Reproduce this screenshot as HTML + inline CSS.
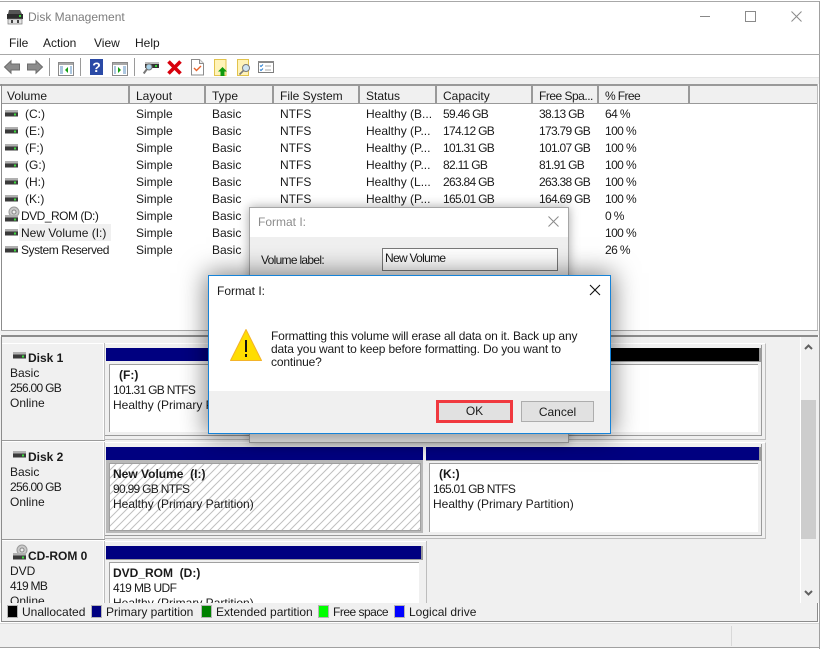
<!DOCTYPE html>
<html><head><meta charset="utf-8"><title>Disk Management</title>
<style>
html,body{margin:0;padding:0;background:#fff}
body{width:821px;height:649px;position:relative;overflow:hidden;font:12px/14px "Liberation Sans",sans-serif;color:#1a1a1a}
.a{position:absolute}
.t{position:absolute;white-space:nowrap;line-height:14px}
.n{letter-spacing:-.7px}
.p{letter-spacing:-.6px}
.h{position:absolute;top:86px;height:17px;background:#f0f0f0;border-right:2px solid #999;box-sizing:border-box;padding:3px 0 0 6px;white-space:nowrap;line-height:14px}
.bar{position:absolute;background:#000080}
b{font-weight:bold}
svg{position:absolute;overflow:visible}
.sq{position:absolute;top:605px;width:11px;height:13px;box-sizing:border-box;border:1px solid #b5b5b5}
</style></head><body>
<svg width="0" height="0" style="position:absolute"><defs>
<g id="drv"><rect x="0" y="0" width="13" height="2.500" fill="#b0b0b0"/><rect x="0" y="2.500" width="13" height="4" fill="#3a3a3a"/><rect x="9" y="3.500" width="2" height="2" fill="#3ddc3d"/></g>
<g id="cd"><circle cx="9" cy="5" r="5" fill="#c9c9c9" stroke="#9a9a9a"/><circle cx="9" cy="5" r="2" fill="#eee" stroke="#888"/><rect x="0" y="8" width="13" height="2.500" fill="#b0b0b0"/><rect x="0" y="10.500" width="13" height="4" fill="#3a3a3a"/><rect x="9" y="11.500" width="2" height="2" fill="#3ddc3d"/></g>
<pattern id="ht" width="8" height="8" patternUnits="userSpaceOnUse"><path d="M-1 9L9 -1M-1 1L1 -1M7 9L9 7" stroke="#c0c0c0" stroke-width="1"/></pattern>
</defs></svg>

<!-- window frame -->
<div class="a" style="left:0;top:1px;width:820px;height:1px;background:#a8a8a8"></div>
<div class="a" style="left:819px;top:1px;width:1px;height:648px;background:#a0a0a0"></div>
<div class="a" style="left:0;top:647px;width:820px;height:1px;background:#a0a0a0"></div>

<!-- title -->
<svg style="left:7px;top:10px" width="16" height="14"><path d="M2 0H13L15 4H1Z" fill="#555"/><rect x="0" y="4" width="16" height="5" fill="#2c2c2c"/><rect x="12" y="5" width="2" height="2" fill="#39d639"/><rect x="1" y="9" width="14" height="5" fill="#e4e4e4" stroke="#777" stroke-width=".7"/><rect x="4" y="10" width="2" height="3" fill="#444"/><rect x="10" y="10" width="2" height="3" fill="#444"/></svg>
<div class="t" style="left:28px;top:10px;color:#7d7d7d">Disk Management</div>
<div class="a" style="left:700px;top:16px;width:10px;height:1px;background:#888"></div>
<div class="a" style="left:745px;top:11px;width:9px;height:9px;border:1px solid #8a8a8a"></div>
<svg style="left:791px;top:11px" width="11" height="11"><path d="M.5 .5L10.500 10.500M10.500 .5L.5 10.500" stroke="#8a8a8a" fill="none"/></svg>

<!-- menu -->
<div class="t" style="left:9px;top:36px">File</div>
<div class="t" style="left:43px;top:36px">Action</div>
<div class="t" style="left:94px;top:36px">View</div>
<div class="t" style="left:135px;top:36px">Help</div>
<div class="a" style="left:0;top:54px;width:820px;height:1px;background:#a8a8a8"></div>

<!-- toolbar -->
<svg style="left:4px;top:60px" width="16" height="14"><path d="M.5 7L7 .8V4H15.500V10H7V13.200Z" fill="#8c8c8c" stroke="#6c6c6c"/></svg>
<svg style="left:27px;top:60px" width="16" height="14"><path d="M15.500 7L9 .8V4H.5V10H9V13.200Z" fill="#8c8c8c" stroke="#6c6c6c"/></svg>
<div class="a" style="left:49px;top:58px;width:1px;height:18px;background:#9a9a9a"></div>
<svg style="left:58px;top:62px" width="16" height="14"><rect x=".5" y=".5" width="15" height="13" fill="#fff" stroke="#8a8a8a"/><rect x="1" y="1" width="14" height="2" fill="#a8a8a8"/><path d="M2 5H5M2 7H5M2 9H5M2 11H5M12 5H14M12 7H14M12 9H14M12 11H14" stroke="#5a8fc0"/><path d="M10 5V11L7 8Z" fill="#12a012"/></svg>
<div class="a" style="left:80px;top:58px;width:1px;height:18px;background:#9a9a9a"></div>
<div class="a" style="left:90px;top:59px;width:13px;height:16px;background:#2a4aa6;color:#fff;font:bold 14px/16px 'Liberation Sans',sans-serif;text-align:center">?</div>
<svg style="left:112px;top:62px" width="16" height="14"><rect x=".5" y=".5" width="15" height="13" fill="#fff" stroke="#8a8a8a"/><rect x="1" y="1" width="14" height="2" fill="#a8a8a8"/><path d="M2 5H4M2 7H4M2 9H4M2 11H4M11 5H14M11 7H14M11 9H14M11 11H14" stroke="#5a8fc0"/><path d="M6 5V11L9 8Z" fill="#12a012"/></svg>
<div class="a" style="left:134px;top:58px;width:1px;height:18px;background:#9a9a9a"></div>
<svg style="left:143px;top:62px" width="16" height="13"><rect x="2" y="0" width="14" height="2" fill="#bdbdbd"/><rect x="2" y="2" width="14" height="4" fill="#333"/><rect x="12" y="3" width="2" height="2" fill="#35d635"/><circle cx="6" cy="5" r="3" fill="#a9d3ea" stroke="#777"/><path d="M4 7L.7 11.500" stroke="#777" stroke-width="2"/></svg>
<svg style="left:167px;top:60px" width="15" height="15"><path d="M1.500 1.500L13.500 13.500M13.500 1.500L1.500 13.500" stroke="#d8000c" stroke-width="3.600"/></svg>
<svg style="left:191px;top:59px" width="13" height="17"><path d="M.5 .5H8.500L12.500 4.500V16H.5Z" fill="#fff" stroke="#8c8c8c"/><path d="M8.500 .5V4.500H12.500" fill="#e8e8e8" stroke="#8c8c8c"/><path d="M3 9L5.500 11.500L10 7" fill="none" stroke="#e8622a" stroke-width="1.400"/></svg>
<svg style="left:214px;top:59px" width="13" height="17"><rect x=".5" y=".5" width="11.500" height="16" fill="#fff3b8" stroke="#e2c34c"/><path d="M8.500 8L13 12.500H10.500V17H6.500V12.500H4Z" fill="#0f9a0f"/></svg>
<svg style="left:237px;top:59px" width="14" height="17"><rect x=".5" y=".5" width="11" height="16" fill="#fff3b8" stroke="#e2c34c"/><circle cx="9" cy="9" r="3.500" fill="#cfe5f2" stroke="#7a7a7a"/><path d="M6.500 11.500L2.500 15.500" stroke="#7a7a7a" stroke-width="1.600"/></svg>
<svg style="left:258px;top:61px" width="16" height="12"><rect x=".5" y=".5" width="15" height="11" fill="#fff" stroke="#7f7f7f"/><rect x="0" y="0" width="16" height="2" fill="#8a8a8a"/><path d="M2 4.500L3 5.500L5 3.500M2 8.500L3 9.500L5 7.500" fill="none" stroke="#2a7fd0"/><path d="M7 5H13M7 9H13" stroke="#aaa"/></svg>

<div class="a" style="left:0;top:77px;width:819px;height:1px;background:#e2e2e2"></div>
<div class="a" style="left:0;top:78px;width:819px;height:6px;background:#f0f0f0"></div>

<!-- list -->
<div class="a" style="left:0;top:84px;width:818px;height:2px;background:#999"></div>
<div class="a" style="left:1px;top:84px;width:1px;height:250px;background:#8c8c8c"></div>
<div class="a" style="left:2px;top:103px;width:816px;height:1px;background:#999"></div>
<div class="a" style="left:817px;top:84px;width:1px;height:250px;background:#bbb"></div>
<div class="h" style="left:2px;width:128px;padding-left:5px">Volume</div>
<div class="h" style="left:130px;width:76px">Layout</div>
<div class="h" style="left:206px;width:68px">Type</div>
<div class="h" style="left:274px;width:86px">File System</div>
<div class="h" style="left:360px;width:77px">Status</div>
<div class="h" style="left:437px;width:96px">Capacity</div>
<div class="h" style="left:533px;width:66px;letter-spacing:-.5px">Free Spa...</div>
<div class="h" style="left:599px;width:91px;letter-spacing:-.6px">% Free</div>
<div class="h" style="left:690px;width:127px;border-right:0"></div>

<svg style="left:5px;top:110px" width="13" height="7"><use href="#drv"/></svg>
<svg style="left:5px;top:127px" width="13" height="7"><use href="#drv"/></svg>
<svg style="left:5px;top:144px" width="13" height="7"><use href="#drv"/></svg>
<svg style="left:5px;top:161px" width="13" height="7"><use href="#drv"/></svg>
<svg style="left:5px;top:178px" width="13" height="7"><use href="#drv"/></svg>
<svg style="left:5px;top:195px" width="13" height="7"><use href="#drv"/></svg>
<svg style="left:5px;top:207px" width="15" height="14"><use href="#cd"/></svg>
<div class="a" style="left:19px;top:224px;width:92px;height:17px;background:#f0f0f0"></div>
<svg style="left:5px;top:229px" width="13" height="7"><use href="#drv"/></svg>
<svg style="left:5px;top:246px" width="13" height="7"><use href="#drv"/></svg>

<div class="t" style="left:25px;top:107px">(C:)</div>
<div class="t" style="left:25px;top:124px">(E:)</div>
<div class="t" style="left:25px;top:141px">(F:)</div>
<div class="t" style="left:25px;top:158px">(G:)</div>
<div class="t" style="left:25px;top:175px">(H:)</div>
<div class="t" style="left:25px;top:192px">(K:)</div>
<div class="t" style="left:21px;top:209px;letter-spacing:-.5px">DVD_ROM (D:)</div>
<div class="t" style="left:21px;top:226px">New Volume (I:)</div>
<div class="t" style="left:21px;top:243px;letter-spacing:-.45px">System Reserved</div>

<div class="t" style="left:136px;top:107px">Simple</div><div class="t" style="left:212px;top:107px">Basic</div><div class="t" style="left:280px;top:107px">NTFS</div><div class="t" style="left:366px;top:107px">Healthy (B...</div><div class="t n" style="left:443px;top:107px">59.46 GB</div><div class="t n" style="left:539px;top:107px">38.13 GB</div><div class="t p" style="left:605px;top:107px">64 %</div>
<div class="t" style="left:136px;top:124px">Simple</div><div class="t" style="left:212px;top:124px">Basic</div><div class="t" style="left:280px;top:124px">NTFS</div><div class="t" style="left:366px;top:124px">Healthy (P...</div><div class="t n" style="left:443px;top:124px">174.12 GB</div><div class="t n" style="left:539px;top:124px">173.79 GB</div><div class="t p" style="left:605px;top:124px">100 %</div>
<div class="t" style="left:136px;top:141px">Simple</div><div class="t" style="left:212px;top:141px">Basic</div><div class="t" style="left:280px;top:141px">NTFS</div><div class="t" style="left:366px;top:141px">Healthy (P...</div><div class="t n" style="left:443px;top:141px">101.31 GB</div><div class="t n" style="left:539px;top:141px">101.07 GB</div><div class="t p" style="left:605px;top:141px">100 %</div>
<div class="t" style="left:136px;top:158px">Simple</div><div class="t" style="left:212px;top:158px">Basic</div><div class="t" style="left:280px;top:158px">NTFS</div><div class="t" style="left:366px;top:158px">Healthy (P...</div><div class="t n" style="left:443px;top:158px">82.11 GB</div><div class="t n" style="left:539px;top:158px">81.91 GB</div><div class="t p" style="left:605px;top:158px">100 %</div>
<div class="t" style="left:136px;top:175px">Simple</div><div class="t" style="left:212px;top:175px">Basic</div><div class="t" style="left:280px;top:175px">NTFS</div><div class="t" style="left:366px;top:175px">Healthy (L...</div><div class="t n" style="left:443px;top:175px">263.84 GB</div><div class="t n" style="left:539px;top:175px">263.38 GB</div><div class="t p" style="left:605px;top:175px">100 %</div>
<div class="t" style="left:136px;top:192px">Simple</div><div class="t" style="left:212px;top:192px">Basic</div><div class="t" style="left:280px;top:192px">NTFS</div><div class="t" style="left:366px;top:192px">Healthy (P...</div><div class="t n" style="left:443px;top:192px">165.01 GB</div><div class="t n" style="left:539px;top:192px">164.69 GB</div><div class="t p" style="left:605px;top:192px">100 %</div>
<div class="t" style="left:136px;top:209px">Simple</div><div class="t" style="left:212px;top:209px">Basic</div><div class="t p" style="left:605px;top:209px">0 %</div>
<div class="t" style="left:136px;top:226px">Simple</div><div class="t" style="left:212px;top:226px">Basic</div><div class="t p" style="left:605px;top:226px">100 %</div>
<div class="t" style="left:136px;top:243px">Simple</div><div class="t" style="left:212px;top:243px">Basic</div><div class="t p" style="left:605px;top:243px">26 %</div>

<!-- graphical view -->
<div class="a" style="left:0;top:330px;width:819px;height:5px;background:#f0f0f0"></div>
<div class="a" style="left:1px;top:330px;width:817px;height:1px;background:#a8a8a8"></div>
<div class="a" style="left:1px;top:335px;width:817px;height:2px;background:#8c8c8c"></div>
<div class="a" style="left:0;top:337px;width:819px;height:266px;background:#f0f0f0"></div>
<div class="a" style="left:1px;top:337px;width:1px;height:284px;background:#8c8c8c"></div>

<!-- scrollbar -->
<div class="a" style="left:800px;top:337px;width:1px;height:266px;background:#fff"></div>
<div class="a" style="left:801px;top:400px;width:15px;height:139px;background:#cdcdcd"></div>
<svg style="left:804px;top:344px" width="9" height="6"><path d="M1 5L4.500 1.500L8 5" fill="none" stroke="#606060" stroke-width="2"/></svg>
<svg style="left:804px;top:590px" width="9" height="6"><path d="M1 1L4.500 4.500L8 1" fill="none" stroke="#606060" stroke-width="2"/></svg>

<!-- left disk panels -->
<div class="a" style="left:2px;top:343px;width:101px;height:1px;background:#fff"></div>
<div class="a" style="left:103px;top:343px;width:1px;height:260px;background:#fff"></div>
<div class="a" style="left:104px;top:343px;width:1px;height:260px;background:#bdbdbd"></div>
<div class="a" style="left:2px;top:440px;width:103px;height:1px;background:#9a9a9a"></div>
<div class="a" style="left:2px;top:441px;width:103px;height:1px;background:#fff"></div>
<div class="a" style="left:2px;top:539px;width:103px;height:1px;background:#9a9a9a"></div>
<div class="a" style="left:2px;top:540px;width:103px;height:1px;background:#fff"></div>

<svg style="left:13px;top:352px" width="13" height="7"><use href="#drv"/></svg>
<div class="t" style="left:28px;top:351px"><b>Disk 1</b></div>
<div class="t" style="left:10px;top:366px">Basic</div>
<div class="t n" style="left:10px;top:381px">256.00 GB</div>
<div class="t" style="left:10px;top:396px">Online</div>
<svg style="left:13px;top:451px" width="13" height="7"><use href="#drv"/></svg>
<div class="t" style="left:28px;top:450px"><b>Disk 2</b></div>
<div class="t" style="left:10px;top:465px">Basic</div>
<div class="t n" style="left:10px;top:480px">256.00 GB</div>
<div class="t" style="left:10px;top:495px">Online</div>
<svg style="left:13px;top:545px" width="15" height="15"><use href="#cd"/></svg>
<div class="t" style="left:28px;top:549px"><b>CD-ROM 0</b></div>
<div class="t" style="left:10px;top:564px">DVD</div>
<div class="t n" style="left:10px;top:579px">419 MB</div>
<div class="t" style="left:10px;top:594px">Online</div>

<!-- Disk 1 -->
<div class="a" style="left:105px;top:343px;width:661px;height:97px;border-top:1px solid #fff;border-right:1px solid #bdbdbd;border-bottom:1px solid #bdbdbd;box-sizing:border-box"></div>
<div class="a" style="left:105px;top:345px;width:657px;height:91px;border-right:1px solid #9a9a9a;border-bottom:1px solid #9a9a9a;box-sizing:border-box;background:#f0f0f0"></div>
<div class="bar" style="left:106px;top:348px;width:320px;height:13px"></div>
<div class="bar" style="left:426px;top:348px;width:334px;height:13px;background:#000"></div>
<div class="a" style="left:759px;top:348px;width:2px;height:14px;background:#9a9a9a"></div>
<div class="a" style="left:426px;top:361px;width:335px;height:1px;background:#9a9a9a"></div>
<div class="a" style="left:109px;top:364px;width:649px;height:68px;background:#fff;border-left:1px solid #a0a0a0;border-top:1px solid #a0a0a0;box-sizing:border-box"></div>
<div class="t" style="left:119px;top:368px"><b>(F:)</b></div>
<div class="t n" style="left:113px;top:383px">101.31 GB NTFS</div>
<div class="t" style="left:113px;top:398px">Healthy (Primary Partition)</div>

<!-- Disk 2 -->
<div class="a" style="left:105px;top:442px;width:661px;height:97px;border-top:1px solid #fff;border-right:1px solid #bdbdbd;border-bottom:1px solid #bdbdbd;box-sizing:border-box"></div>
<div class="a" style="left:105px;top:444px;width:657px;height:92px;border-right:1px solid #9a9a9a;border-bottom:1px solid #9a9a9a;box-sizing:border-box;background:#f0f0f0"></div>
<div class="a" style="left:106px;top:460px;width:317px;height:73px;background:#b9b9b9"></div>
<div class="bar" style="left:106px;top:447px;width:317px;height:13px"></div>
<div class="bar" style="left:426px;top:447px;width:333px;height:13px"></div>
<div class="a" style="left:759px;top:447px;width:2px;height:14px;background:#9a9a9a"></div>
<div class="a" style="left:426px;top:460px;width:335px;height:1px;background:#9a9a9a"></div>
<svg style="left:109px;top:463px" width="312" height="68"><rect x=".5" y=".5" width="311" height="67" fill="#fff" stroke="#a0a0a0"/><rect x="1" y="1" width="310" height="66" fill="url(#ht)"/></svg>
<div class="t" style="left:113px;top:467px"><b>New Volume&nbsp; (I:)</b></div>
<div class="t n" style="left:113px;top:482px">90.99 GB NTFS</div>
<div class="t" style="left:113px;top:497px">Healthy (Primary Partition)</div>
<div class="a" style="left:429px;top:463px;width:329px;height:69px;background:#fff;border-left:1px solid #a0a0a0;border-top:1px solid #a0a0a0;box-sizing:border-box"></div>
<div class="t" style="left:439px;top:467px"><b>(K:)</b></div>
<div class="t n" style="left:433px;top:482px">165.01 GB NTFS</div>
<div class="t" style="left:433px;top:497px">Healthy (Primary Partition)</div>

<!-- CD-ROM -->
<div class="a" style="left:105px;top:541px;width:322px;height:1px;background:#fff"></div>
<div class="bar" style="left:106px;top:546px;width:315px;height:13px"></div>
<div class="a" style="left:421px;top:546px;width:2px;height:14px;background:#9a9a9a"></div>
<div class="a" style="left:106px;top:559px;width:317px;height:1px;background:#9a9a9a"></div>
<div class="a" style="left:426px;top:541px;width:1px;height:62px;background:#bdbdbd"></div>
<div class="a" style="left:109px;top:562px;width:310px;height:41px;background:#fff;border-left:1px solid #a0a0a0;border-top:1px solid #a0a0a0;box-sizing:border-box"></div>
<div class="t" style="left:113px;top:566px"><b>DVD_ROM&nbsp; (D:)</b></div>
<div class="t p" style="left:113px;top:581px">419 MB UDF</div>
<div class="t" style="left:113px;top:596px">Healthy (Primary Partition)</div>

<!-- legend -->
<div class="a" style="left:2px;top:603px;width:815px;height:18px;background:#f0f0f0"></div>
<div class="a" style="left:817px;top:603px;width:1px;height:19px;background:#8c8c8c"></div>
<div class="a" style="left:1px;top:603px;width:1px;height:19px;background:#8c8c8c"></div>
<div class="a" style="left:1px;top:621px;width:817px;height:1px;background:#8c8c8c"></div>
<div class="a" style="left:0;top:622px;width:819px;height:1px;background:#fff"></div>
<div class="sq" style="left:7px;background:#000"></div><div class="t" style="left:22px;top:605px">Unallocated</div>
<div class="sq" style="left:91px;background:#000080"></div><div class="t" style="left:106px;top:605px">Primary partition</div>
<div class="sq" style="left:201px;background:#008000"></div><div class="t" style="left:216px;top:605px">Extended partition</div>
<div class="sq" style="left:318px;background:#00ff00"></div><div class="t" style="left:333px;top:605px;letter-spacing:-.5px">Free space</div>
<div class="sq" style="left:394px;background:#0000ff"></div><div class="t" style="left:409px;top:605px">Logical drive</div>

<!-- status bar -->
<div class="a" style="left:0;top:623px;width:819px;height:24px;background:#f0f0f0;border-top:1px solid #d8d8d8;box-sizing:border-box"></div>
<div class="a" style="left:731px;top:626px;width:1px;height:20px;background:#d8d8d8"></div>

<!-- back dialog -->
<div class="a" style="left:249px;top:207px;width:320px;height:236px;background:#f0f0f0;border:1px solid #a6a6a6;box-sizing:border-box;box-shadow:0 0 10px rgba(0,0,0,.35)"></div>
<div class="a" style="left:250px;top:208px;width:318px;height:29px;background:#fff"></div>
<div class="t" style="left:258px;top:215px;color:#8c8c8c">Format I:</div>
<svg style="left:548px;top:216px" width="11" height="11"><path d="M.5 .5L10.500 10.500M10.500 .5L.5 10.500" stroke="#8a8a8a" fill="none"/></svg>
<div class="t n" style="left:261px;top:253px">Volume label:</div>
<div class="a" style="left:382px;top:248px;width:176px;height:23px;background:#fff;border:1px solid #7a7a7a;box-sizing:border-box"></div>
<div class="t n" style="left:385px;top:251px">New Volume</div>

<!-- front dialog -->
<div class="a" style="left:208px;top:275px;width:403px;height:159px;background:#fff;border:1px solid #1683d8;box-sizing:border-box;box-shadow:0 0 24px 2px rgba(0,0,0,.5)"></div>
<div class="a" style="left:209px;top:391px;width:401px;height:42px;background:#f0f0f0"></div>
<div class="t" style="left:217px;top:284px">Format I:</div>
<svg style="left:589px;top:284px" width="12" height="12"><path d="M1 1L11 11M11 1L1 11" stroke="#111" fill="none" stroke-width="1.100"/></svg>
<svg style="left:230px;top:329px" width="32" height="32"><path d="M16 .5L31.500 31.500H.5Z" fill="#ffdd00" stroke="#f3b32a" stroke-linejoin="round"/><rect x="15" y="11" width="2" height="12" fill="#111"/><rect x="15" y="25" width="2" height="3" fill="#111"/></svg>
<div class="t" style="left:271px;top:329px;letter-spacing:-.15px">Formatting this volume will erase all data on it. Back up any</div>
<div class="t" style="left:271px;top:342px;letter-spacing:-.15px">data you want to keep before formatting. Do you want to</div>
<div class="t" style="left:271px;top:355px;letter-spacing:-.15px">continue?</div>
<div class="a" style="left:436px;top:400px;width:77px;height:23px;background:#e1e1e1;border:3px solid #f0393f;box-sizing:border-box;text-align:center;line-height:17px">OK</div>
<div class="a" style="left:521px;top:401px;width:73px;height:21px;background:#e1e1e1;border:1px solid #adadad;box-sizing:border-box;text-align:center;line-height:20px">Cancel</div>
</body></html>
